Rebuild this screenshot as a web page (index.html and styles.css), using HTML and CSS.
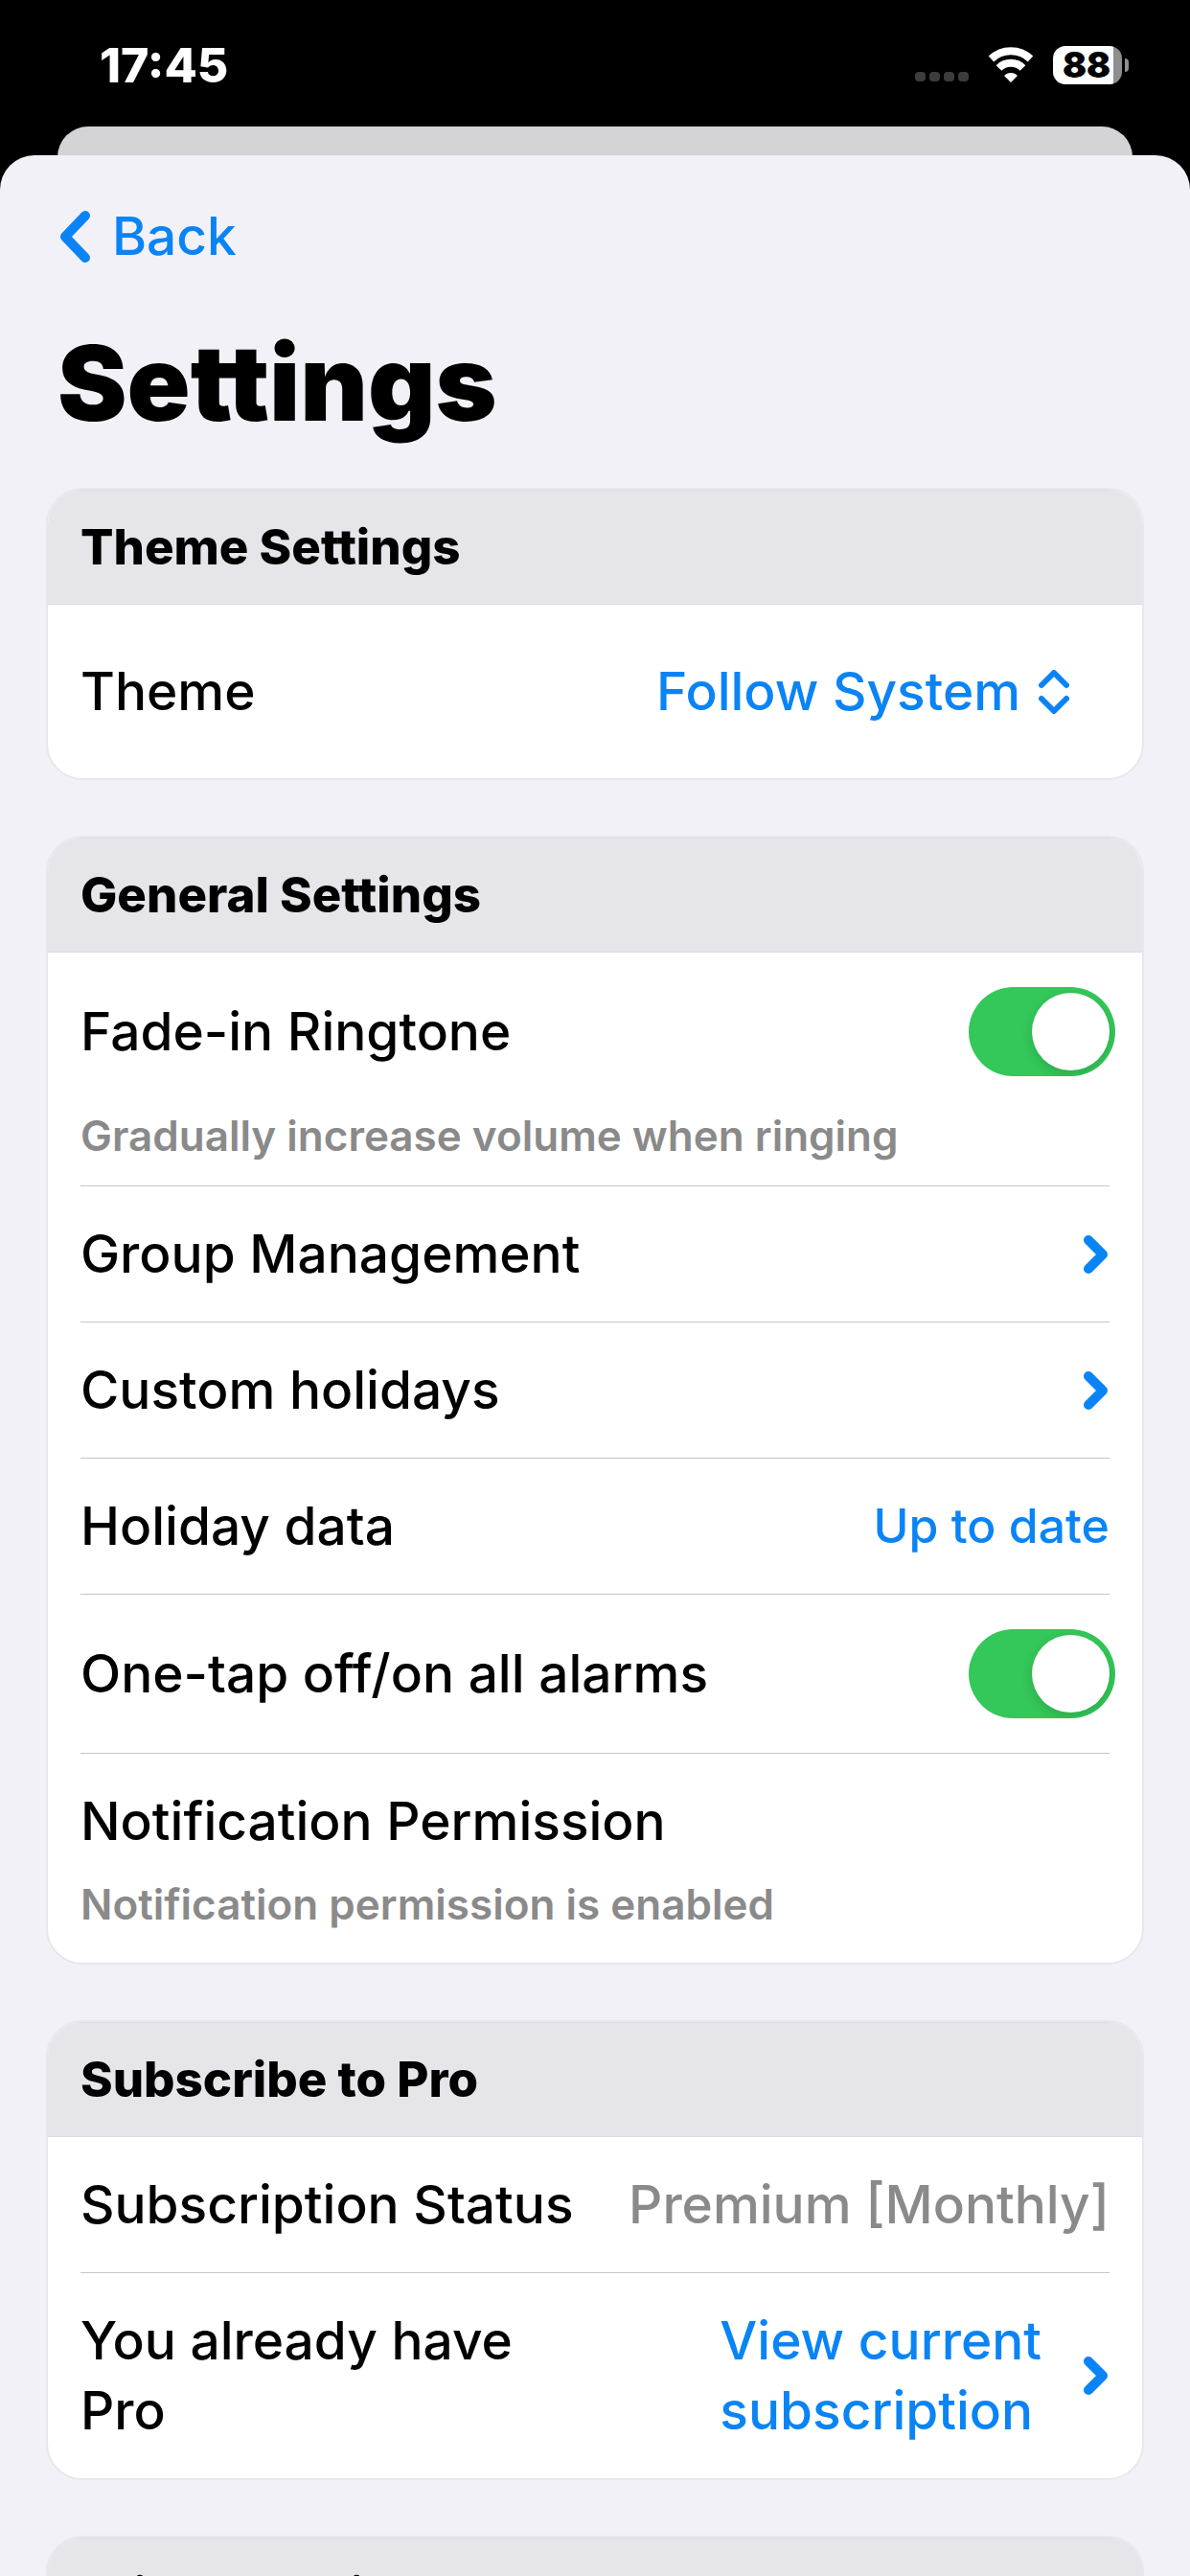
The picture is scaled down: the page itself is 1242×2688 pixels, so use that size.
FILE: index.html
```html
<!DOCTYPE html>
<html lang="en">
<head>
    <meta charset="UTF-8">
    <meta name="viewport" content="width=device-width, initial-scale=1.0">
    <title>Settings</title>
    <link rel="stylesheet" href="styles.css">
</head>
<body>
    <header class="status-bar">
        <span class="time">17:45</span>
        <div class="status-icons">
            <svg class="dots" width="56" height="40" viewBox="0 0 56 40" fill="#3c3c3c">
                <rect x="0" y="27" width="11" height="10" rx="4"/>
                <rect x="15" y="27" width="11" height="10" rx="4"/>
                <rect x="30" y="27" width="11" height="10" rx="4"/>
                <rect x="45" y="27" width="11" height="10" rx="4"/>
            </svg>
            <svg class="wifi" width="48" height="40" viewBox="0 0 48 40">
                <g fill="none" stroke="#fff" stroke-width="8">
                    <path d="M3.5 13.5a29.5 29.5 0 0 1 41 0"/>
                    <path d="M11.5 23a17.6 17.6 0 0 1 25 0"/>
                </g>
                <path d="M24 38 17 31a9.5 9.5 0 0 1 14 0z" fill="#fff"/>
            </svg>
            <div class="battery"><span class="battery-level">88</span></div>
        </div>
    </header>

    <div class="sheet-behind"></div>

    <main class="sheet">
        <a class="back" href="#">
            <svg width="34" height="56" viewBox="0 0 34 56"><path d="M28 6 7 28 28 50"/></svg>
            Back
        </a>
        <h1>Settings</h1>

        <section class="card">
            <h2>Theme Settings</h2>
            <div class="row row-theme">
                <label for="theme">Theme</label>
                <div class="picker">
                    <select id="theme">
                        <option>Follow System</option>
                        <option>Light</option>
                        <option>Dark</option>
                    </select>
                    <svg width="32" height="46" viewBox="0 0 32 46"><path d="M3 16 16 3l13 13M3 30l13 13 13-13"/></svg>
                </div>
            </div>
        </section>

        <section class="card">
            <h2>General Settings</h2>
            <div class="row row-toggle row-hint">
                <label for="fade">Fade-in Ringtone</label>
                <input class="toggle" type="checkbox" id="fade" checked>
                <p class="hint">Gradually increase volume when ringing</p>
            </div>
            <a class="row" href="#">
                <span>Group Management</span>
                <svg class="chevron" width="27" height="42" viewBox="0 0 27 42"><path d="M5 6l15 15L5 36"/></svg>
            </a>
            <a class="row" href="#">
                <span>Custom holidays</span>
                <svg class="chevron" width="27" height="42" viewBox="0 0 27 42"><path d="M5 6l15 15L5 36"/></svg>
            </a>
            <div class="row">
                <span>Holiday data</span>
                <button class="update" type="button">Up to date</button>
            </div>
            <div class="row row-toggle">
                <label for="one-tap">One-tap off/on all alarms</label>
                <input class="toggle" type="checkbox" id="one-tap" checked>
            </div>
            <div class="row row-hint">
                <span>Notification Permission</span>
                <p class="hint">Notification permission is enabled</p>
            </div>
        </section>

        <section class="card">
            <h2>Subscribe to Pro</h2>
            <div class="row">
                <span>Subscription Status</span>
                <span class="plan">Premium [Monthly]</span>
            </div>
            <a class="row" href="#">
                <span>You already have<br>Pro</span>
                <span class="link">
                    <span>View current<br>subscription</span>
                    <svg class="chevron" width="27" height="42" viewBox="0 0 27 42"><path d="M5 6l15 15L5 36"/></svg>
                </span>
            </a>
        </section>

        <section class="card">
            <h2>Privacy Policy</h2>
        </section>
    </main>
</body>
</html>
```

FILE: styles.css
```css
* {
    margin: 0;
    padding: 0;
    box-sizing: border-box;
}

body {
    display: flex;
    flex-direction: column;
    height: 100vh;
    overflow: hidden;
    background: #000;
    color: #000;
    font-family: Inter, "Liberation Sans", sans-serif;
    font-size: 55px;
    font-weight: 540;
    line-height: 73px;
}

a {
    color: inherit;
    text-decoration: none;
}

svg {
    flex: none;
}

/* status bar */
.status-bar {
    display: flex;
    justify-content: space-between;
    align-items: center;
    flex: none;
    height: 132px;
    padding: 4px 71px 0 104px;
    color: #fff;
}

.time {
    font-size: 50px;
    font-weight: 800;
}

.status-icons {
    display: flex;
    align-items: center;
    gap: 20px;
}

.battery {
    position: relative;
    width: 72px;
    height: 40px;
    border-radius: 13px;
    background: linear-gradient(to right, #fff 88%, #8e8e8e 88%);
}

.battery::after {
    content: "";
    position: absolute;
    left: 75px;
    top: 13px;
    width: 4px;
    height: 14px;
    border-radius: 0 4px 4px 0;
    background: #8e8e8e;
}

.battery-level {
    display: block;
    padding-left: 10px;
    color: #000;
    font-size: 37px;
    font-weight: 900;
    line-height: 40px;
}

/* sheets */
.sheet-behind {
    flex: none;
    height: 70px;
    margin: 0 60px -40px;
    border-radius: 32px 32px 0 0;
    background: #d4d4d6;
}

.sheet {
    flex: none;
    padding: 48px 48px 0;
    border-radius: 36px 36px 0 0;
    background: #f2f1f7;
}

.back {
    display: inline-flex;
    align-items: center;
    gap: 22px;
    padding-left: 13px;
    color: #0a84f5;
    vertical-align: top;
}

h1 {
    margin: 53px 0 47px;
    padding-left: 12px;
    font-size: 109px;
    font-weight: 900;
    line-height: 126px;
}

svg path {
    stroke-linecap: round;
    stroke-linejoin: round;
}

.wifi path {
    stroke-linecap: butt;
}

.back path,
.chevron path,
.picker path {
    fill: none;
    stroke: #0a84f5;
    stroke-width: 10;
}

.picker path {
    stroke-width: 6;
}

/* cards */
.card {
    margin-bottom: 58px;
    border: 2px solid #e8e7ec;
    border-radius: 38px;
    background: #fff;
    overflow: hidden;
}

h2 {
    padding: 23px 34px;
    border-bottom: 1px solid #dddce1;
    background: #e6e5ea;
    box-shadow: inset 0 1px #dddce1;
    font-size: 51px;
    font-weight: 800;
}

.row {
    display: flex;
    justify-content: space-between;
    align-items: center;
    margin: 0 34px;
    padding: 34px 0;
    border-bottom: 1px solid #c6c6c8;
}

.row:last-child {
    border-bottom: none;
}

.row-theme {
    padding: 54px 42px 54px 0;
}

.row-toggle {
    padding: 36px 0;
}

.row-hint {
    flex-wrap: wrap;
}

.hint {
    width: 100%;
    margin: 14px 0 -10px;
    color: #8a8a8a;
    font-size: 44px;
    font-weight: 600;
}

.row-toggle .hint {
    margin: 26px 0 -21px;
}

.picker {
    display: flex;
    align-items: center;
    gap: 18px;
}

.picker select {
    appearance: none;
    border: none;
    background: none;
    color: #0a84f5;
    font: inherit;
    cursor: pointer;
}

.toggle {
    appearance: none;
    display: flex;
    flex: none;
    width: 153px;
    height: 93px;
    margin-right: -6px;
    padding: 6px;
    border-radius: 47px;
    background: #e9e9ea;
    cursor: pointer;
}

.toggle::before {
    content: "";
    width: 81px;
    height: 81px;
    border-radius: 50%;
    background: #fff;
    box-shadow: 0 4px 12px rgba(0, 0, 0, 0.15);
}

.toggle:checked {
    justify-content: flex-end;
    background: #34c759;
    overflow: hidden;
}

.update {
    border: none;
    background: none;
    color: #0a84f5;
    font: inherit;
    font-size: 50px;
    cursor: pointer;
}

.plan {
    color: #8a8a8a;
}

.link {
    display: flex;
    align-items: center;
    gap: 44px;
    color: #0a84f5;
}
```
